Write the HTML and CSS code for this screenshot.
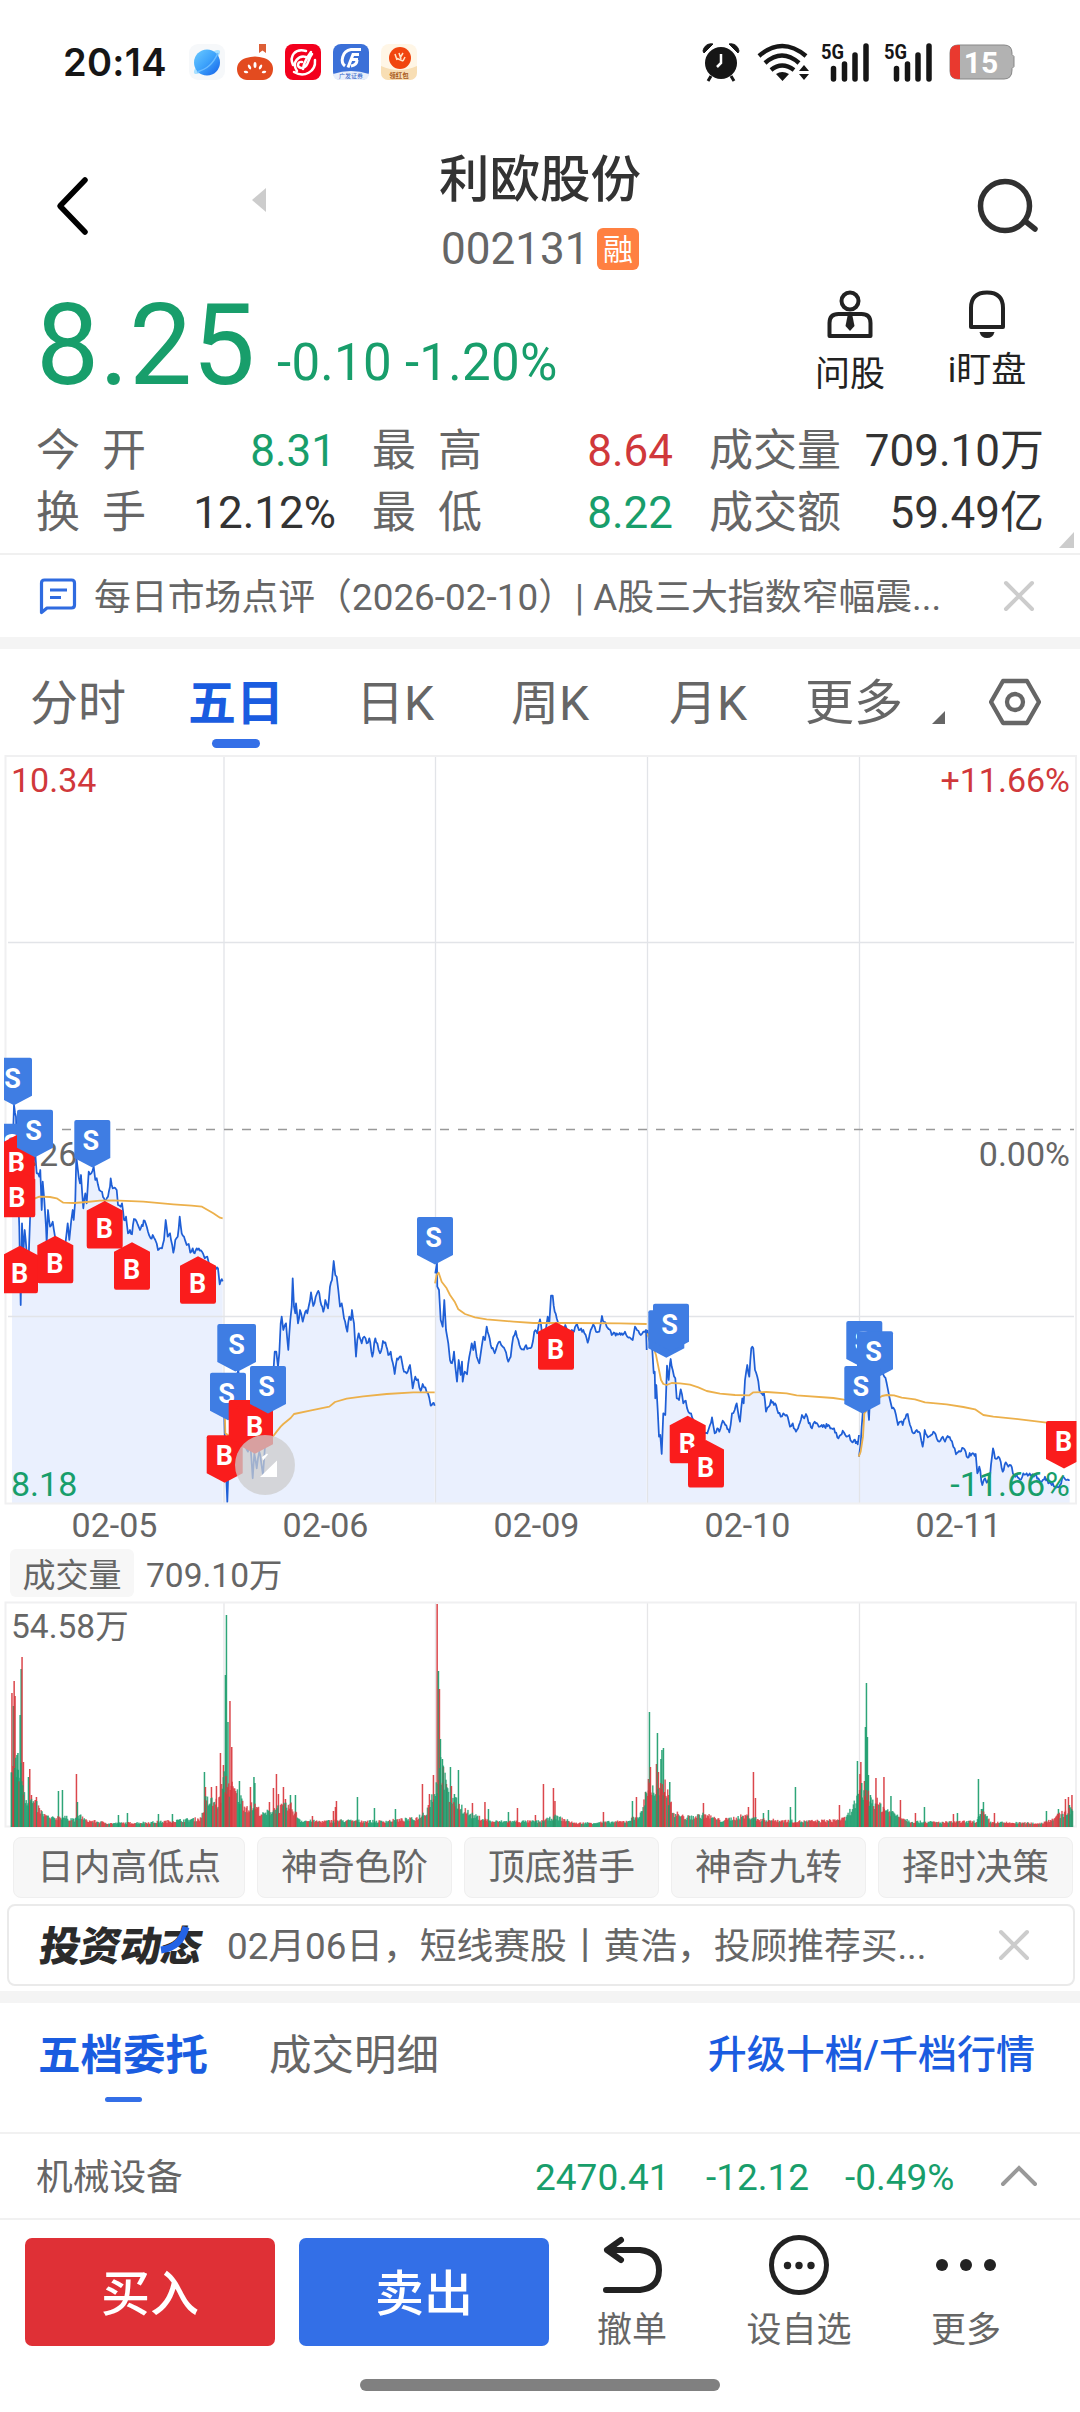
FILE: index.html
```html
<!DOCTYPE html>
<html lang="zh-CN">
<head>
<meta charset="utf-8">
<title>利欧股份 002131</title>
<link rel="stylesheet" href="styles.css">
</head>
<body>
<div class="status">
  <span class="clock">20:14</span>
  <div class="apps">
    <svg width="36" height="36" viewBox="0 0 36 36"><defs><linearGradient id="sky" x1="0" y1="0" x2="1" y2="1"><stop offset="0" stop-color="#6ccbff"/><stop offset=".5" stop-color="#3da2fb"/><stop offset="1" stop-color="#1460e8"/></linearGradient></defs><rect width="36" height="36" rx="9" fill="#f6f8fa"/><ellipse cx="18" cy="18" rx="17" ry="5" transform="rotate(-42 18 18)" fill="#a9e0ff"/><circle cx="18" cy="18.500" r="13" fill="url(#sky)"/><path d="M29 9C24 20 18 25 8 28" stroke="#6bbcff" stroke-width="1.500" fill="none"/></svg>
    <svg width="36" height="36" viewBox="0 0 36 36"><path d="M22 0h7v9l-3.500-2.500L22 9z" fill="#dd5f36"/><path d="M9 14q9-3 18 0c6 2 9 6 9 11 0 7-5 11-10 11H10C5 36 0 32 0 25c0-5 3-9 9-11z" fill="#e34b1f"/><g fill="#fff"><ellipse cx="18" cy="21" rx="1.500" ry="3"/><ellipse cx="12.500" cy="23" rx="1.300" ry="2.600" transform="rotate(-30 12.500 23)"/><ellipse cx="23.500" cy="23" rx="1.300" ry="2.600" transform="rotate(30 23.500 23)"/><ellipse cx="9" cy="28" rx="2.300" ry="1.200" transform="rotate(15 9 28)"/><ellipse cx="27" cy="28" rx="2.300" ry="1.200" transform="rotate(-15 27 28)"/></g></svg>
    <svg width="36" height="36" viewBox="0 0 36 36"><rect width="36" height="36" rx="8" fill="#f3001d"/><path d="M21 7C10 4 4 12 8 21M9 28c10 6 22 0 21-12M12 27C6 18 14 11 21 13M26 8C22 14 19 17 18 25M27 10c-4 4-3 14-11 14-5-1-3-7 1-6" fill="none" stroke="#fff" stroke-width="2.500" stroke-linecap="round"/></svg>
    <svg width="36" height="36" viewBox="0 0 36 36"><rect width="36" height="36" rx="8" fill="#3b70d8"/><path d="M0 30q18-6 36 0a6 6 0 0 1-6 6H6a6 6 0 0 1-6-6z" fill="#e9effb"/><path d="M28 5.500H18C9 7 7 18 12 22M26 10.500h-6l-5 13M25 15.500h-6M18 22q6-1 6-6" fill="none" stroke="#fff" stroke-width="3"/><text x="18" y="34" font-size="6" text-anchor="middle" fill="#2e62c8">广发证券</text></svg>
    <svg width="36" height="36" viewBox="0 0 36 36"><rect width="36" height="36" rx="8" fill="#fff6e6"/><circle cx="19" cy="14" r="11" fill="#f1450f"/><path d="M14 10l2 6M18 9l2 6M15 14l7 3M22 9l-3 5M24 13l-2 4" stroke="#ffe4c8" stroke-width="1.500"/><path d="M0 22q18 8 36 0v7a7 7 0 0 1-7 7H7a7 7 0 0 1-7-7z" fill="#f8deb4"/><text x="18" y="34" font-size="6.500" text-anchor="middle" fill="#a85a1c" font-weight="700">领红包</text></svg>
  </div>
  <div class="system">
    <svg class="alarm" width="38" height="40" viewBox="0 0 38 40"><circle cx="19" cy="21" r="16" fill="#161616"/><path d="M1 9C2 4 6 1 11 2L2 11zM37 9C36 4 32 1 27 2l9 9z" fill="#161616" stroke="#161616"/><path d="M9 34l-3 5M29 34l3 5" stroke="#161616" stroke-width="3"/><path d="M19 12v9l-4 4" fill="none" stroke="#fff" stroke-width="2.500"/></svg>
    <svg class="wifi" width="52" height="40" viewBox="0 0 52 40"><g fill="none" stroke="#161616" stroke-width="4.400"><path d="M2 14q23-20 47 0"/><path d="M8 21q17-15 34 0M14 28q11-9 23 0"/></g><path d="M19 32q6-4 13 0l-6.500 7zM42 29l5-6 5 6zM42 32l5 6 5-6z" fill="#161616"/></svg>
    <svg class="signal" width="48" height="40" viewBox="0 0 48 40"><text x="0" y="16.500" font-size="20" font-weight="700" textLength="23" lengthAdjust="spacingAndGlyphs" fill="#161616">5G</text><path d="M12.500 26.500v10.500M23.500 22v15M34 13v24M45 4v33" stroke="#161616" stroke-width="5.500" stroke-linecap="round"/></svg>
    <svg class="signal second" width="48" height="40" viewBox="0 0 48 40"><text x="0" y="16.500" font-size="20" font-weight="700" textLength="23" lengthAdjust="spacingAndGlyphs" fill="#161616">5G</text><path d="M12.500 26.500v10.500M23.500 22v15M34 13v24M45 4v33" stroke="#161616" stroke-width="5.500" stroke-linecap="round"/></svg>
    <svg class="battery" width="67" height="36" viewBox="0 0 67 36"><path d="M9 1h46q8 0 8 8v1.500l2 2v10l-2 2V26q0 9-8 9H9q-8 0-8-8V9q0-8 8-8z" fill="#b2b2b2" stroke="#878787"/><path d="M11 1H9Q1 1 1 9v18q0 8 8 8h2z" fill="#e9392f"/><text x="32" y="28.500" font-size="30" font-weight="700" text-anchor="middle" fill="#fff">15</text></svg>
  </div>
</div>

<header class="header">
  <svg class="back" width="40" height="64" viewBox="0 0 40 64"><path d="M33 6L8 32l25 26" fill="none" stroke="#000" stroke-width="5.500" stroke-linecap="round" stroke-linejoin="round"/></svg>
  <svg class="prev" width="16" height="26" viewBox="0 0 16 26"><path d="M15 1v24L1 13z" fill="#ccc"/></svg>
  <div class="title">
    <h1>利欧股份</h1>
    <div class="code"><span>002131</span><b>融</b></div>
  </div>
  <svg class="search" width="66" height="62" viewBox="0 0 66 62"><circle cx="30" cy="30" r="24.500" fill="none" stroke="#303030" stroke-width="5.500"/><path d="M50 45l10 8" stroke="#303030" stroke-width="5.500" stroke-linecap="round"/></svg>
</header>

<section class="quote">
  <div class="price">8.25</div>
  <div class="change">-0.10 -1.20%</div>
  <div class="ask">
    <svg width="46" height="50" viewBox="0 0 46 50"><g fill="none" stroke="#222" stroke-width="4"><circle cx="23" cy="11" r="8.500"/><path d="M2.500 46V33q0-9 9-9h23q9 0 9 9v13z" stroke-linejoin="round"/></g><path d="M20.500 26h5l2 10-4.500 5-4.500-5z" fill="#222"/></svg>
    <span>问股</span>
  </div>
  <div class="watch">
    <svg width="40" height="50" viewBox="0 0 40 50"><path d="M4 38V19Q4 3.500 20 3.500T36 19v19z" fill="none" stroke="#222" stroke-width="4" stroke-linejoin="round"/><path d="M12.500 43h15q-1.500 6-7.500 6t-7.500-6z" fill="#222"/></svg>
    <span>i盯盘</span>
  </div>
</section>

<section class="stats">
  <div><i>今<s></s>开</i><em class="down">8.31</em></div>
  <div><i>最<s></s>高</i><em class="up">8.64</em></div>
  <div><i>成交量</i><em>709.10万</em></div>
  <div><i>换<s></s>手</i><em>12.12%</em></div>
  <div><i>最<s></s>低</i><em class="down">8.22</em></div>
  <div><i>成交额</i><em>59.49亿</em></div>
  <svg class="corner" width="15" height="16" viewBox="0 0 15 16"><path d="M15 0v16H0z" fill="#ccc"/></svg>
</section>

<section class="notice">
  <svg width="38" height="37" viewBox="0 0 38 37"><path d="M2.500 34.500V5q0-3 3-3h27q3 0 3 3v22q0 3-3 3H8z" fill="none" stroke="#2f6be0" stroke-width="3.200" stroke-linejoin="round"/><path d="M11 12h17M11 19.500h11" stroke="#2f6be0" stroke-width="3.200"/></svg>
  <p>每日市场点评（2026-02-10）| A股三大指数窄幅震...</p>
  <svg class="close" width="32" height="32" viewBox="0 0 32 32"><path d="M3 3l26 26M29 3L3 29" stroke="#ccc" stroke-width="4" stroke-linecap="round"/></svg>
</section>

<nav class="periods">
  <span>分时</span><span class="active">五日</span><span>日K</span><span>周K</span><span>月K</span><span class="more">更多</span>
  <svg class="drop" width="14" height="14" viewBox="0 0 14 14"><path d="M13 0v13H0z" fill="#666"/></svg>
  <svg class="gear" width="52" height="48" viewBox="0 0 52 48"><path d="M14 3h24l12 21-12 21H14L2 24z" fill="none" stroke="#666" stroke-width="4.300" stroke-linejoin="round"/><circle cx="26" cy="24" r="8" fill="none" stroke="#666" stroke-width="4.300"/></svg>
</nav>

<svg class="chart" width="1080" height="750" viewBox="0 0 1080 750">
  <defs><clipPath id="plot"><rect x="4" y="0" width="1072.500" height="750"/></clipPath></defs>
  <g id="areas"></g>
  <g stroke="#e2e4e8" stroke-width="1.300"><path d="M8 187.500h1066M8 561.500h1066M224 0v749M435.500 0v749M647.500 0v749M859.500 0v749"/></g>
  <rect x="5.500" y="1" width="1070.500" height="747.500" fill="none" stroke="#f0f0f1" stroke-width="2"/>
  <path d="M8 374.500h1066" stroke="#999" stroke-width="1.300" stroke-dasharray="9 9"/>
  <g id="traces" fill="none" stroke-linejoin="round"></g>
  <g class="axis">
    <text x="11" y="37" class="up">10.34</text><text x="1070" y="37" text-anchor="end" class="up">+11.66%</text>
    <text x="11" y="411">9.26</text><text x="1070" y="411" text-anchor="end">0.00%</text>
    <text x="11" y="741" class="down">8.18</text><text x="1070" y="741" text-anchor="end" class="down">-11.66%</text>
  </g>
  <g id="markers" clip-path="url(#plot)"></g>
  <circle cx="265" cy="710" r="30" fill="#ccc" fill-opacity=".75"/>
  <path d="M277 705.500v16.500h-17zM262 702l5-3.500 1 1-5 6z" fill="#fff"/>
</svg>
<div class="dates"><span>02-05</span><span>02-06</span><span>02-09</span><span>02-10</span><span>02-11</span></div>

<div class="volume-head"><b>成交量</b><span>709.10万</span></div>
<svg class="volume" width="1080" height="227" viewBox="0 0 1080 227">
  <path d="M224 1v225M435.500 1v225M647.500 1v225M859.500 1v225" stroke="#e6e6e8" stroke-width="1.300"/>
  <rect x="5.500" y="1.500" width="1070.500" height="224" fill="none" stroke="#f0f0f1" stroke-width="2"/>
  <g id="bars"></g>
  <text x="11" y="36.500">54.58万</text>
</svg>

<div class="chips"><span>日内高低点</span><span>神奇色阶</span><span>顶底猎手</span><span>神奇九转</span><span>择时决策</span></div>

<section class="promo">
  <div class="brand"><span>投资动态</span><svg width="34" height="30" viewBox="0 0 34 30"><path d="M28 1C24 15 17 22 3 24" fill="none" stroke="#2463e6" stroke-width="7"/></svg></div>
  <p>02月06日，短线赛股丨黄浩，投顾推荐买...</p>
  <svg class="close" width="32" height="32" viewBox="0 0 32 32"><path d="M3 3l26 26M29 3L3 29" stroke="#ccc" stroke-width="4" stroke-linecap="round"/></svg>
</section>

<nav class="depth">
  <span class="active">五档委托</span><span>成交明细</span><a>升级十档/千档行情</a>
</nav>

<section class="sector">
  <span class="name">机械设备</span><span class="down v1">2470.41</span><span class="down v2">-12.12</span><span class="down v3">-0.49%</span>
  <svg width="40" height="24" viewBox="0 0 40 24"><path d="M4 20L20 4l16 16" fill="none" stroke="#999" stroke-width="4" stroke-linecap="round"/></svg>
</section>

<footer class="actions">
  <button class="buy">买入</button><button class="sell">卖出</button>
  <div class="act"><svg width="60" height="60" viewBox="0 0 60 60"><path d="M19 5L5 15l14 10M5 15h33q19 2 19 20t-19 20H4" fill="none" stroke="#222" stroke-width="6" stroke-linecap="round" stroke-linejoin="round"/></svg><span>撤单</span></div>
  <div class="act wide"><svg width="60" height="60" viewBox="0 0 60 60"><circle cx="30" cy="30" r="27.500" fill="none" stroke="#222" stroke-width="5"/><g fill="#222"><circle cx="18.500" cy="30.500" r="3.700"/><circle cx="30" cy="30.500" r="3.700"/><circle cx="42" cy="30.500" r="3.700"/></g></svg><span>设自选</span></div>
  <div class="act"><svg width="60" height="60" viewBox="0 0 60 60"><g fill="#222"><circle cx="6" cy="30" r="6"/><circle cx="30" cy="30" r="6"/><circle cx="54" cy="30" r="6"/></g></svg><span>更多</span></div>
</footer>
<div class="home"></div>
<script src="chart.js"></script>
</body>
</html>
```
FILE: styles.css
```css
* { box-sizing: border-box; margin: 0; padding: 0; }
body { width: 1080px; height: 2412px; overflow: hidden; background: #fff; color: #333; font-family: Roboto, "Noto Sans CJK SC", sans-serif; display: flex; flex-direction: column; }
body > * { flex: none; }
svg { display: block; flex: none; }
i, em, s { font-style: normal; text-decoration: none; }
.up { color: #d0383b; fill: #d0383b; }
.down { color: #189e6b; fill: #189e6b; }

.status { height: 123px; display: flex; align-items: center; padding-left: 63px; padding-right: 64px; }
.clock { font: 600 38px/40px Inter, sans-serif; color: #161616; width: 126px; letter-spacing: .3px; }
.apps { display: flex; gap: 12px; }
.system { margin-left: auto; display: flex; align-items: center; font-family: Roboto, sans-serif; }
.wifi { margin-left: 17px; }
.signal { margin-left: 12px; overflow: visible; }
.second { margin-left: 15px; }
.battery { margin-left: 17px; }

.header { height: 157px; display: flex; position: relative; align-items: flex-start; }
.back { margin: 51px 0 0 52px; }
.prev { margin: 64px 0 0 159px; }
.title { margin-left: 172px; padding-top: 27px; width: 204px; }
.title h1 { font-size: 50.500px; line-height: 60px; font-weight: 500; white-space: nowrap; }
.code { display: flex; align-items: center; margin-top: 17px; height: 44px; font-size: 44px; line-height: 48px; color: #666; }
.code span { width: 158px; padding-left: 2px; }
.code b { width: 42px; height: 42px; background: #ff8041; border-radius: 6px; color: #fff; font-size: 30px; line-height: 43px; text-align: center; font-weight: 400; }
.search { margin: 53px 0 0 332px; }

.quote { height: 138px; display: flex; padding-left: 36px; align-items: flex-start; }
.price { width: 241px; margin-top: 1px; font-size: 112.500px; line-height: 130px; color: #189e6b; }
.change { width: 533px; margin-top: 53px; font-size: 51px; line-height: 60px; color: #189e6b; letter-spacing: .3px; white-space: nowrap; }
.ask, .watch { width: 80px; margin-top: 9px; display: flex; flex-direction: column; align-items: center; font-size: 35px; line-height: 40px; color: #222; white-space: nowrap; }
.ask { padding-top: 1px; }
.ask span { margin-top: 15px; }
.watch { margin-left: 57px; }
.watch span { margin-top: 12px; }

.stats { height: 137px; position: relative; display: grid; grid-template-columns: 300px 301px 335px; column-gap: 36px; grid-auto-rows: 62.700px; padding-top: 1.500px; padding-left: 36px; font-size: 44px; line-height: 62px; border-bottom: 2px solid #f0f0f0; }
.stats div { display: flex; justify-content: space-between; white-space: nowrap; }
.stats i { color: #666; }
.stats s { display: inline-block; width: 22px; }
.corner { position: absolute; right: 6px; bottom: 5px; }

.notice { height: 82px; display: flex; align-items: center; padding-left: 39px; font-size: 36.800px; color: #666; }
.notice p { margin-left: 17px; padding-top: 3px; width: 909px; line-height: 60px; white-space: nowrap; letter-spacing: .05px; }
.close { flex: none; }
.periods { height: 118px; border-top: 12px solid #f4f4f4; display: grid; grid-template-columns: 158px 168px 155px 158px 136px 127px 57px 60px; padding-left: 30px; font-size: 48px; line-height: 109px; color: #666; white-space: nowrap; }
.periods .active { position: relative; font-weight: 700; color: #1a5ce0; }
.periods .active::after { content: ""; position: absolute; left: 24px; top: 90px; width: 48px; height: 9px; border-radius: 5px; background: #346fe7; }
.more { font-size: 49px; }
.drop { margin-top: 62px; }
.gear { margin-top: 29px; }
.chart { height: 750px; }
.axis { font-size: 34px; fill: #666; }
.dates { height: 44px; padding-left: 9px; display: grid; grid-template-columns: repeat(5, 211px); text-align: center; font-size: 34px; line-height: 41px; color: #666; }
.volume-head { height: 52px; display: flex; gap: 12px; padding-left: 10px; font-size: 33px; line-height: 53px; color: #666; }
.volume-head span { font-size: 33.500px; }
.volume-head b { width: 124px; height: 48px; background: #f7f7f7; border-radius: 6px; font-weight: 400; text-align: center; }
.volume { height: 227px; fill: #666; font-size: 33.500px; }
.chips { height: 76px; display: grid; grid-template-columns: 232px repeat(4, 195px); gap: 12px; padding: 9px 7px 9px 13px; font-size: 36.800px; line-height: 59px; color: #666; }
.chips span { text-align: center; background: #f7f7f7; border: 1.500px solid #efefef; border-radius: 8px; white-space: nowrap; }
.promo { height: 82px; margin: 0 5px 0 7px; border: 2px solid #eaeaea; border-radius: 8px; display: flex; align-items: center; color: #666; font-size: 36.800px; }
.brand { position: relative; width: 187px; margin-left: 31px; padding-top: 3px; font-size: 41px; line-height: 60px; font-weight: 900; color: #2b2b2b; letter-spacing: -.7px; }
.brand span { display: block; width: 160px; transform: skewX(-9deg); white-space: nowrap; }
.brand svg { position: absolute; left: 118px; top: 12px; }
.promo p { width: 771px; padding-top: 3px; line-height: 60px; white-space: nowrap; letter-spacing: -.05px; }
.depth { margin-top: 5px; height: 141px; border-top: 12px solid #f4f4f4; display: flex; padding-left: 38px; font-size: 42.500px; line-height: 105px; color: #666; }
.depth .active { position: relative; width: 231px; color: #1a5ce0; font-weight: 700; }
.depth .active::after { content: ""; position: absolute; left: 67px; top: 94px; width: 37px; height: 5px; border-radius: 3px; background: #346fe7; }
.depth a { margin-left: auto; margin-right: 45px; font-size: 39px; color: #1a5ce0; font-weight: 500; }
.sector { height: 88px; border-top: 2px solid #f1f1f1; border-bottom: 2px solid #f1f1f1; display: flex; align-items: center; padding-left: 36px; font-size: 37px; line-height: 60px; }
.sector span { padding-top: 4px; }
.sector .name { width: 499px; color: #666; font-size: 36.700px; }
.v1 { width: 171px; }
.v2 { width: 139px; }
.v3 { width: 154px; }
.actions { height: 159px; display: flex; align-items: flex-start; padding: 18px 0 0 25px; }
.actions button { width: 250px; height: 108px; border: 0; border-radius: 7px; color: #fff; font: 500 49px/114px Roboto, "Noto Sans CJK SC", sans-serif; }
.buy { background: #df3036; }
.actions .sell { margin-left: 24px; background: #336fe7; }
.act { width: 110px; margin: -3px 0 0 28px; display: flex; flex-direction: column; align-items: center; font-size: 35px; line-height: 40px; color: #666; white-space: nowrap; }
.act span { margin-top: 16px; }
.act + .act { margin-left: 57px; }
.home { width: 360px; height: 12px; margin: 0 auto; border-radius: 6px; background: #808080; }
```
FILE: chart.js
```js
const NS = "http://www.w3.org/2000/svg";
const add = (parent, tag, attrs, text) => {
  const node = document.createElementNS(NS, tag);
  for (const key in attrs) node.setAttribute(key, attrs[key]);
  if (text) node.textContent = text;
  document.getElementById(parent).appendChild(node);
};
let seed = 7;
const rnd = () => (seed = (seed * 16807) % 2147483647) / 2147483647;

// Each session: origin of its sub-grid, price points and average points in thirds of a pixel.
const sessions = [
  { x: 0, y: 855,
    price: "36,400 42,195 48,230 52,400 58,560 62,795 66,550 70,640 74,570 80,640 86,650 90,540 95,420 105,330 110,400 114,400 118,410 121,390 125,510 128,425 133,480 138,560 140,610 144,510 150,560 158,545 165,590 180,620 195,620 203,550 208,600 214,540 218,510 221,540 226,480 229,350 233,385 240,430 243,405 250,505 256,460 260,490 266,395 274,400 281,380 286,420 290,415 298,450 306,455 312,475 318,480 324,470 330,440 332,415 338,445 350,450 354,495 362,500 366,490 372,540 378,530 384,580 390,570 396,583 402,537 410,545 420,570 434,542 444,575 452,595 458,585 466,600 474,630 486,625 492,600 497,540 503,590 510,580 520,638 526,600 533,590 539,530 545,580 552,590 560,615 566,612 571,638 578,625 584,640 590,625 606,635 614,655 622,650 632,680 645,690 654,685 659,733 662,722 668,724",
    avg: "36,400 60,520 105,475 118,470 150,471 170,475 190,488 222,489 260,486 300,482 340,481 430,485 520,493 575,497 606,500 640,520 660,533 668,535" },
  { x: 660, y: 1275,
    price: "10,590 14,760 22,965 28,800 35,700 45,620 55,570 65,650 75,790 84,815 90,780 98,895 103,820 110,865 118,815 124,850 129,885 134,810 140,740 150,700 158,600 164,515 169,515 174,560 178,520 182,430 185,410 190,450 198,430 205,510 211,420 215,380 218,295 222,380 226,400 228,370 234,430 240,390 248,425 256,395 262,400 267,375 273,337 280,378 287,350 292,338 298,340 304,375 310,395 316,360 324,385 330,320 336,300 341,243 346,285 350,290 355,330 360,380 365,370 372,415 382,455 388,410 393,420 396,390 402,430 408,530 412,480 416,460 425,490 433,470 440,490 448,475 457,530 466,475 472,490 480,520 489,483 496,487 505,525 512,515 524,582 531,535 543,530 552,575 560,580 570,555 578,625 586,590 594,598 602,633 608,612 616,622 624,640 632,677 638,670 644,677",
    avg: "12,600 16,760 60,790 130,790 160,768 170,755 182,740 190,732 212,714 222,702 270,692 328,680 345,666 380,656 430,649 500,642 580,637 644,637" },
  { x: 660, y: 1275,
    price: "646,280 651,250 652,320 657,330 662,420 668,440 673,360 678,450 685,490 690,540 696,550 702,515 706,560 711,605 716,540 722,585 726,545 728,605 734,575 741,583 748,530 755,490 760,510 764,485 770,530 778,550 785,500 790,470 795,480 800,440 806,465 815,505 824,520 832,495 840,485 848,500 855,510 865,545 872,530 880,470 887,453 895,480 905,508 915,500 925,505 935,500 943,455 952,460 960,418 966,460 975,465 983,410 988,430 993,347 998,347 1004,395 1010,415 1020,460 1036,435 1046,465 1055,450 1062,455 1071,432 1080,450 1090,450 1103,488 1115,445 1120,433 1128,455 1138,455 1146,408 1152,425 1160,440 1175,465 1190,460 1205,460 1215,455 1222,470 1238,480 1245,440 1255,452 1262,465 1270,455 1278,450 1280,510",
    avg: "645,310 650,285 656,278 665,305 680,325 690,345 705,367 715,388 735,402 765,412 800,418 880,425 940,429 1060,429 1200,430 1280,432" },
  { x: 1860, y: 1275,
    price: "82,450 97,510 101,580 104,575 106,655 109,615 113,690 117,770 121,765 125,822 130,700 136,705 139,620 141,557 146,600 150,550 152,537 158,570 166,595 170,655 177,660 182,628 190,670 197,662 205,695 213,700 220,720 232,735 245,750 262,760 270,735 276,712 284,760 292,745 298,755 308,722 316,735 328,757 336,700 344,690 350,670 360,725 367,655 371,670 375,600 382,555 388,590 394,505 400,505 405,570 412,590 418,630 425,640 432,640 438,695 446,680 453,660 462,675 468,675 475,700 482,710 490,700 500,705 510,740 518,730 528,755 537,735 546,705 553,715 558,702 566,730 576,745 584,725 596,740 605,735 614,740 625,735 634,745 642,745 652,772 662,765 668,752 676,765 688,765 695,785 702,780 713,793 717,765",
    avg: "82,460 100,500 108,525 115,560 123,600 130,612 140,615 155,609 180,610 210,614 235,622 260,633 300,641 345,645 388,646 400,637 440,636 500,640 530,646 640,654 672,659 716,662" },
  { x: 1860, y: 1275,
    price: "717,830 722,790 728,700 735,600 742,660 747,720 752,600 765,540 780,580 788,580 793,590 800,610 808,650 816,685 824,690 834,735 842,725 848,735 856,715 863,702 870,735 880,760 890,750 900,760 908,800 914,750 920,765 930,768 940,755 950,775 958,785 968,770 975,785 983,768 992,780 1000,800 1008,823 1020,815 1030,805 1040,830 1055,822 1067,822 1072,880 1078,860 1087,915 1095,895 1100,908 1110,890 1116,830 1119,805 1125,835 1135,830 1142,845 1148,875 1157,847 1165,860 1172,855 1182,885 1190,885 1200,900 1210,880 1220,880 1235,885 1245,885 1255,895 1265,905 1275,890 1285,910 1295,915 1305,920 1320,915 1330,890 1338,900 1349,900",
    avg: "716,830 722,815 729,770 733,700 760,665 786,648 800,645 822,646 845,653 885,658 915,667 980,673 1030,681 1065,688 1090,705 1120,710 1200,718 1280,728 1349,732" }
];
for (const day of sessions) {
  const parse = s => s.split(" ").map(p => p.split(",").map(Number)).map(([a, b]) => [(a + day.x) / 3, (b + day.y) / 3]);
  const key = parse(day.price);
  const line = [];
  key.forEach((p, i) => {
    line.push(p);
    const next = key[i + 1];
    if (!next) return;
    const n = Math.floor((next[0] - p[0]) / 0.9);
    for (let k = 1; k < n; k++) {
      const t = k / n;
      line.push([p[0] + (next[0] - p[0]) * t, Math.min(745, p[1] + (next[1] - p[1]) * t + (rnd() - .5) * 4.5)]);
    }
  });
  const pts = line.map(p => p[0].toFixed(1) + "," + p[1].toFixed(1)).join(" ");
  const x0 = line[0][0], x1 = line[line.length - 1][0];
  add("areas", "polygon", { points: `${x0},748 ${pts} ${x1},748`, fill: "#eaf0fe" });
  add("traces", "polyline", { points: pts, stroke: "#1f5fd6", "stroke-width": 1.75 });
  add("traces", "polyline", { points: parse(day.avg).map(p => p.join(",")).join(" "), stroke: "#ecb04b", "stroke-width": 1.8 });
}

// Trade markers: kind (S sell, B buy below the line, D buy above the line), left, top.
const markers = [
  ["S", -4, 302.7], ["S", -5, 368.7], ["B", -1.300, 380], ["B", -.7, 414.7], ["S", 17, 354.7], ["S", 74.3, 365],
  ["B", 2, 490.7], ["B", 37.3, 480.7], ["B", 86.7, 446], ["B", 114, 487.3], ["B", 180, 501.3],
  ["S", 217.3, 569], ["S", 220, 569], ["S", 210, 617.7], ["D", 206.7, 680.3], ["D", 228.7, 645], ["D", 237, 651.3], ["S", 250, 611],
  ["S", 417, 462], ["B", 538, 567.3],
  ["S", 648.3, 555.3], ["S", 653, 548.7], ["B", 669.7, 660.7], ["B", 688, 685],
  ["S", 846.3, 566], ["S", 857, 576.3], ["S", 844.3, 611], ["D", 1046, 666]
];
for (const [kind, x, y] of markers) {
  const up = kind === "B";
  add("markers", "path", {
    transform: `translate(${x} ${y})`,
    d: up ? "M18 0L36 9.500V45Q36 47.500 34 47.500H2Q0 47.500 0 45V9.500Z" : "M2 0H34Q36 0 36 2V38L18 47.500L0 38V2Q0 0 2 0Z",
    fill: kind === "S" ? "#3f7de3" : "#fa1c1c"
  });
  add("markers", "text", { x: x + (kind === "S" ? 16.6 : 17.6), y: y + (up ? 37 : 30), "text-anchor": "middle", "font-size": 27, "font-weight": 700, fill: "#fff" }, kind === "S" ? "S" : "B");
}

// Volume: [x, height] envelope plus individual tall minutes with their colour.
const base = [[10,60],[15,62],[20,60],[25,32],[35,24],[42,14],[50,9],[60,11],[75,8],[80,12],[85,7],[95,6],[110,4],[150,5],[165,6],[200,9],[205,28],[218,26],[223,50],[235,37],[245,22],[255,22],[262,13],[275,20],[290,22],[300,7],[320,6],[340,7],[380,6],[415,9],[425,16],[435,42],[440,67],[448,32],[458,24],[470,13],[490,6],[540,6],[555,11],[575,4],[625,6],[640,13],[648,47],[655,32],[665,45],[672,16],[685,10],[705,13],[720,7],[745,12],[758,8],[800,6],[830,7],[845,9],[855,27],[863,38],[868,32],[885,19],[900,11],[910,6],[940,5],[975,6],[982,16],[990,5],[1040,4],[1050,8],[1072,20]];
const tall = "11.5,134r 13,121g 13.7,146r 14.6,131r 16.5,72g 17.5,74g 19.7,112g 20.7,158g 21.6,170r 23,65r 28,50g 29.3,58r 31,32r 36,30r 58,36g 62,37g 76,53r 77,25g 118,12g 127,14g 158,13g 172,13g 204,55g 205,40r 211,40r 216,41r 220,74r 223,62r 225,152g 226,212g 227.5,105g 229.5,126r 231.3,80r 239,46g 250,40r 253.5,50g 254.4,44g 269,25r 273,39r 276,53r 278,33r 283,40r 285,28r 290,32g 295,32g 312,11r 336,26r 335,20r 333,16r 357,30g 374,19g 395,18g 422,43r 429,33r 433,52r 436.7,223r 438,156g 439,138r 440,88g 442,68g 443,60r 446,43r 450,60g 451,41r 454,33g 458,57g 472,24r 484.5,25r 488,18g 508,15g 517,19r 535,12r 543,43r 553,39r 554.5,26r 603,15r 632,26g 636,30r 645,35r 648,48r 649,115g 650,60r 656,63r 657,94g 658,55r 660.5,68g 661.5,77g 663,79g 664,35r 668.4,32r 669.3,45g 703,24r 748,20r 753,55r 755,29r 763,14g 768,17g 790,20g 795,40g 839,22r 857,66g 859.5,53r 860.4,65r 861.3,44g 864,46r 865,100g 866,144g 867,90g 868,52g 870,32g 875.5,49r 883.5,50r 890.5,31g 900,27r 915,14r 924,20g 953,13r 957,14g 978,48g 981,18g 983,25g 994,14r 1046,16g 1058,18g 1065,28r 1068,30r 1069,22g 1071.5,32r";
const height = x => {
  let i = 0;
  while (i < base.length - 2 && base[i + 1][0] < x) i++;
  const [a, b] = [base[i], base[i + 1]];
  return a[1] + (b[1] - a[1]) * (x - a[0]) / (b[0] - a[0]);
};
const colour = { r: "#d8373d", g: "#1c9d6c" };
const bar = (x, h, c, o) => add("bars", "rect", { x: x.toFixed(2), y: (226 - h).toFixed(1), width: 1.5, height: h.toFixed(1), fill: colour[c], "fill-opacity": o });
tall.split(" ").forEach(t => {
  const [x, rest] = t.split(",");
  bar(+x - .3, parseFloat(rest), rest.slice(-1), .92);
});
let run = "g";
for (let x = 10.5; x < 1072; x += .88) {
  if (rnd() < .3) run = run === "g" ? "r" : "g";
  bar(x, height(x) * (.65 + rnd() * .5), run, .82);
}
```
